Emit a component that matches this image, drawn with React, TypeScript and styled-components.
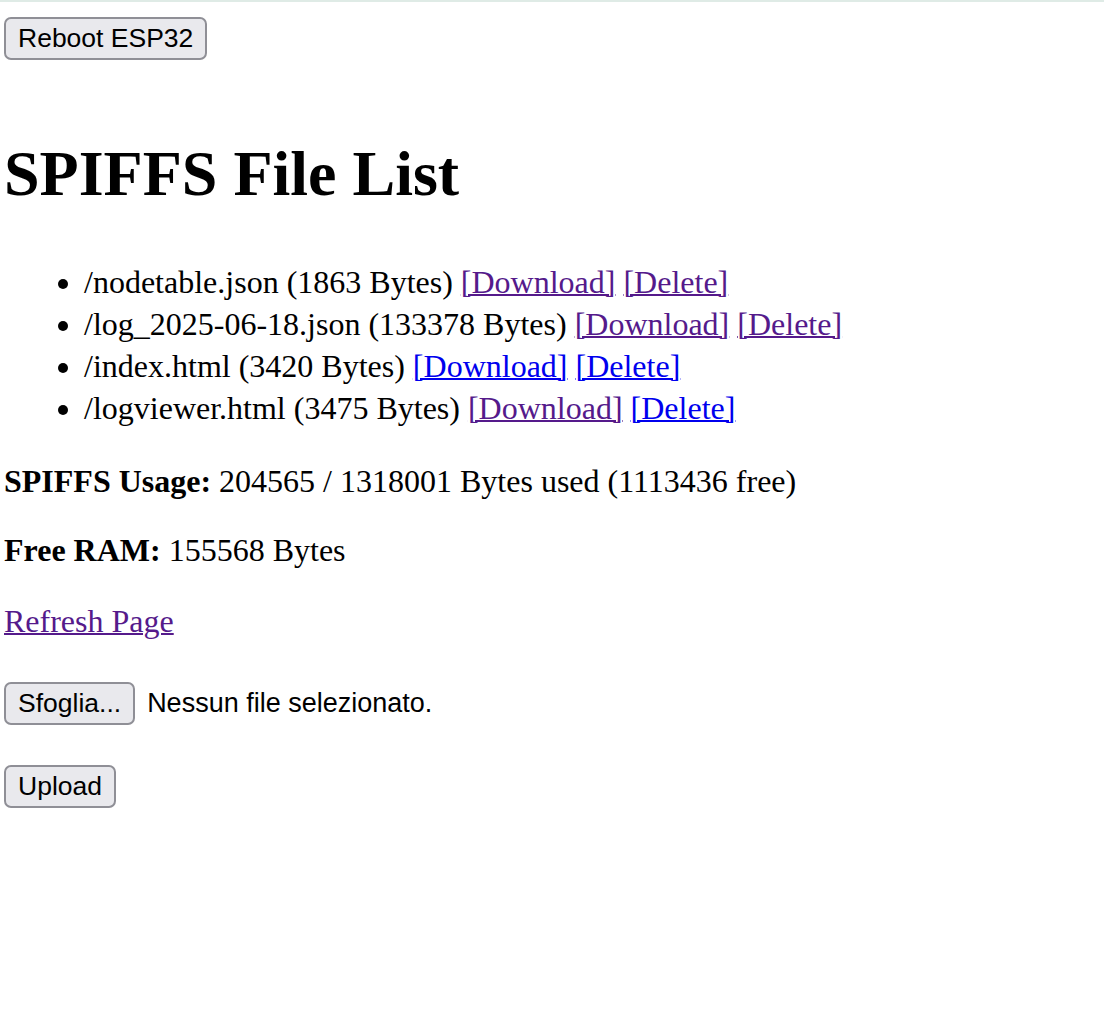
import React from 'react';
import styled, { createGlobalStyle } from 'styled-components';

const GlobalStyle = createGlobalStyle`
  html, body {
    margin: 0;
    padding: 0;
    background: #ffffff;
  }
`;

const Page = styled.div`
  border-top: 2px solid #dfebe6;
  padding: 15px 4px 0;
  font-family: "Liberation Serif", "Times New Roman", serif;
  font-size: 32px;
  color: #000;
`;

const Button = styled.button`
  display: inline-flex;
  align-items: center;
  height: 43px;
  padding: 0 12px;
  margin: 0;
  background: #e9e9ed;
  border: 2px solid #8f8f96;
  border-radius: 7px;
  color: #000;
  font-family: "Liberation Sans", Arial, sans-serif;
  font-size: 26.5px;
  line-height: 1;
  cursor: pointer;
`;

const Title = styled.h1`
  margin: 77px 0 50px;
  font-size: 64px;
  line-height: 74px;
  font-weight: bold;
`;

const FileList = styled.ul`
  margin: 0 0 34px;
  padding-left: 80px;
  list-style: disc;
`;

const FileItem = styled.li`
  line-height: 42px;
`;

const Link = styled.a<{ $visited?: boolean }>`
  color: ${(p) => (p.$visited ? '#551a8b' : '#0000ee')};
  text-decoration: underline;
  text-decoration-thickness: 2px;
`;

const Info = styled.p`
  margin: 32px 0;
  line-height: 37px;
`;

const RefreshLine = styled(Info)`
  padding-top: 2px;
`;

const UploadForm = styled.form`
  display: flex;
  flex-direction: column;
  align-items: flex-start;
  gap: 40px;
  margin-top: 42px;
`;

const FileRow = styled.div`
  display: flex;
  align-items: center;
  gap: 12px;
`;

const FileStatus = styled.span`
  font-family: "Liberation Sans", Arial, sans-serif;
  font-size: 27px;
`;

type FileEntry = {
  name: string;
  size: number;
  downloadVisited: boolean;
  deleteVisited: boolean;
};

const files: FileEntry[] = [
  { name: '/nodetable.json', size: 1863, downloadVisited: true, deleteVisited: true },
  { name: '/log_2025-06-18.json', size: 133378, downloadVisited: true, deleteVisited: true },
  { name: '/index.html', size: 3420, downloadVisited: false, deleteVisited: false },
  { name: '/logviewer.html', size: 3475, downloadVisited: true, deleteVisited: false },
];

export default function App() {
  return (
    <>
      <GlobalStyle />
      <Page>
        <Button type="button">Reboot ESP32</Button>

        <Title>SPIFFS File List</Title>

        <FileList>
          {files.map((f) => (
            <FileItem key={f.name}>
              {f.name} ({f.size} Bytes){' '}
              <Link href="#" $visited={f.downloadVisited}>[Download]</Link>{' '}
              <Link href="#" $visited={f.deleteVisited}>[Delete]</Link>
            </FileItem>
          ))}
        </FileList>

        <Info>
          <b>SPIFFS Usage:</b> 204565 / 1318001 Bytes used (1113436 free)
        </Info>
        <Info>
          <b>Free RAM:</b> 155568 Bytes
        </Info>
        <RefreshLine>
          <Link href="#" $visited>Refresh Page</Link>
        </RefreshLine>

        <UploadForm onSubmit={(e) => e.preventDefault()}>
          <FileRow>
            <Button type="button">Sfoglia...</Button>
            <FileStatus>Nessun file selezionato.</FileStatus>
          </FileRow>
          <Button type="submit">Upload</Button>
        </UploadForm>
      </Page>
    </>
  );
}
